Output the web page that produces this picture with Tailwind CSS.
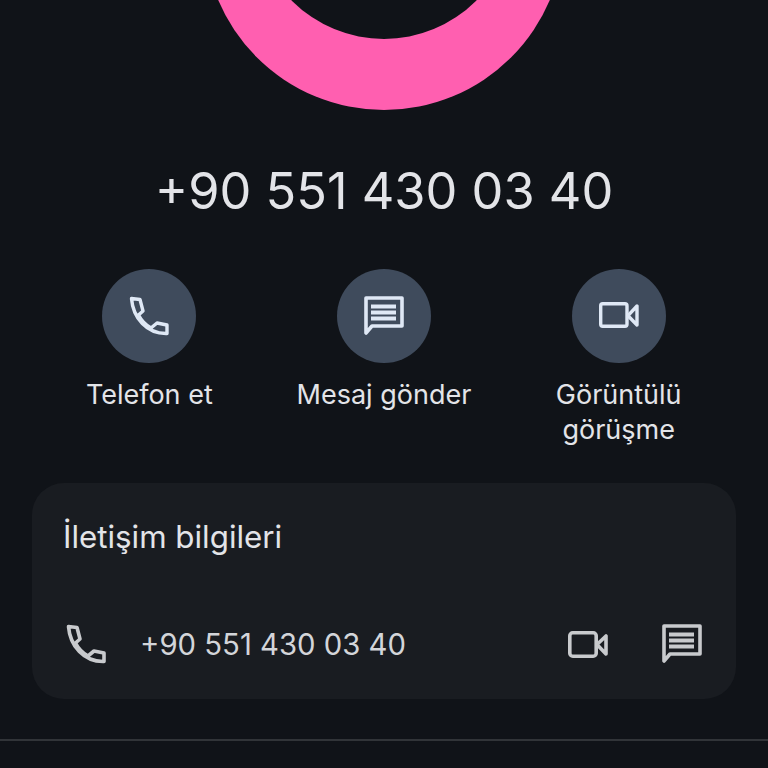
<!DOCTYPE html>
<html lang="tr">
<head>
  <meta charset="UTF-8">
  <title>Kişi</title>
  <meta name="viewport" content="width=device-width, initial-scale=1.0">
  <script src="https://cdn.jsdelivr.net/npm/@tailwindcss/browser@4"></script>
</head>
<body class="bg-[#101318] font-['Inter',sans-serif]">
  <div class="w-[768px] h-[768px] overflow-hidden flex flex-col items-center">
    <!-- avatar ring, cropped by the top edge -->
    <svg class="w-[768px] h-[111px] shrink-0" viewBox="0 0 768 111">
      <circle cx="384" cy="-70" r="180" fill="#ff5fb0"/>
      <circle cx="384" cy="-91" r="130" fill="#101318"/>
    </svg>

    <h1 class="mt-[49px] h-[62px] leading-[62px] text-[50.5px] text-[#e3e4e8]">+90 551 430 03 40</h1>

    <!-- actions -->
    <div class="mt-[47px] w-[704px] grid grid-cols-3 text-[#e3e4e8] text-[27px] leading-[35px] text-center">
      <div class="flex flex-col items-center">
        <div class="w-[94px] h-[94px] rounded-full bg-[#3f4b5c] flex items-center justify-center">
          <svg class="w-[40px] h-[40px]" viewBox="0 0 40 40" fill="none" stroke="#dfe8f5" stroke-width="3.4" stroke-linejoin="round"><path d="M2.5 2.5L11 3.5L14 15L9.5 19C12.5 25 16 28.5 22 32L28 27L38 29V37.5C18 38 4 22 2.5 2.5Z"/></svg>
        </div>
        <p class="mt-[14px]">Telefon et</p>
      </div>
      <div class="flex flex-col items-center">
        <div class="w-[94px] h-[94px] rounded-full bg-[#3f4b5c] flex items-center justify-center">
          <svg class="w-[40px] h-[40px]" viewBox="0 0 40 40" fill="none"><path d="M2 2H38V30H8L2 37Z" stroke="#dfe8f5" stroke-width="3.6" stroke-linejoin="round"/><path d="M7 10.5H32M7 16.5H32M7 22.5H32" stroke="#dfe8f5" stroke-width="4"/></svg>
        </div>
        <p class="mt-[14px]">Mesaj gönder</p>
      </div>
      <div class="flex flex-col items-center">
        <div class="w-[94px] h-[94px] rounded-full bg-[#3f4b5c] flex items-center justify-center">
          <svg class="w-[40px] h-[40px]" viewBox="0 0 40 40" fill="none" stroke="#dfe8f5" stroke-width="3.4" stroke-linejoin="round"><rect x="1.7" y="7.7" width="26.3" height="22.6" rx="2"/><path d="M29 19.7L38 10V29Z"/></svg>
        </div>
        <p class="mt-[14px]">Görüntülü<br>görüşme</p>
      </div>
    </div>

    <!-- contact card -->
    <section class="mt-[36px] w-[704px] h-[216px] shrink-0 rounded-[32px] bg-[#191c21] px-[32px] pt-[36px]">
      <h2 class="text-[31.3px] leading-[36px] -ml-[1px] text-[#e3e4e8]">İletişim bilgileri</h2>
      <div class="mt-[69px] flex items-center text-[#d3d5d9]">
        <svg class="w-[40px] h-[40px] ml-[2px] shrink-0" viewBox="0 0 40 40" fill="none" stroke="#c8cacd" stroke-width="3.6" stroke-linejoin="round"><path d="M2.5 2.5L11 3.5L14 15L9.5 19C12.5 25 16 28.5 22 32L28 27L38 29V37.5C18 38 4 22 2.5 2.5Z"/></svg>
        <span class="ml-[34px] text-[29.3px] leading-[36px] translate-y-[1px]">+90 551 430 03 40</span>
        <div class="ml-auto flex items-center gap-[54px] mr-[2px]">
          <svg class="w-[40px] h-[40px]" viewBox="0 0 40 40" fill="none" stroke="#c8cacd" stroke-width="3.6" stroke-linejoin="round"><rect x="1.8" y="8.8" width="26.4" height="23.4" rx="3"/><path d="M29 20.5L38 12V30Z"/></svg>
          <svg class="w-[40px] h-[40px]" viewBox="0 0 40 40" fill="none"><path d="M2 2H38V30H8L2 37Z" stroke="#c8cacd" stroke-width="3.6" stroke-linejoin="round"/><path d="M7 10.5H32M7 16.5H32M7 22.5H32" stroke="#c8cacd" stroke-width="4"/></svg>
        </div>
      </div>
    </section>

    <div class="mt-[40px] w-full h-[2px] shrink-0 bg-[#313438]"></div>
  </div>
</body>
</html>
